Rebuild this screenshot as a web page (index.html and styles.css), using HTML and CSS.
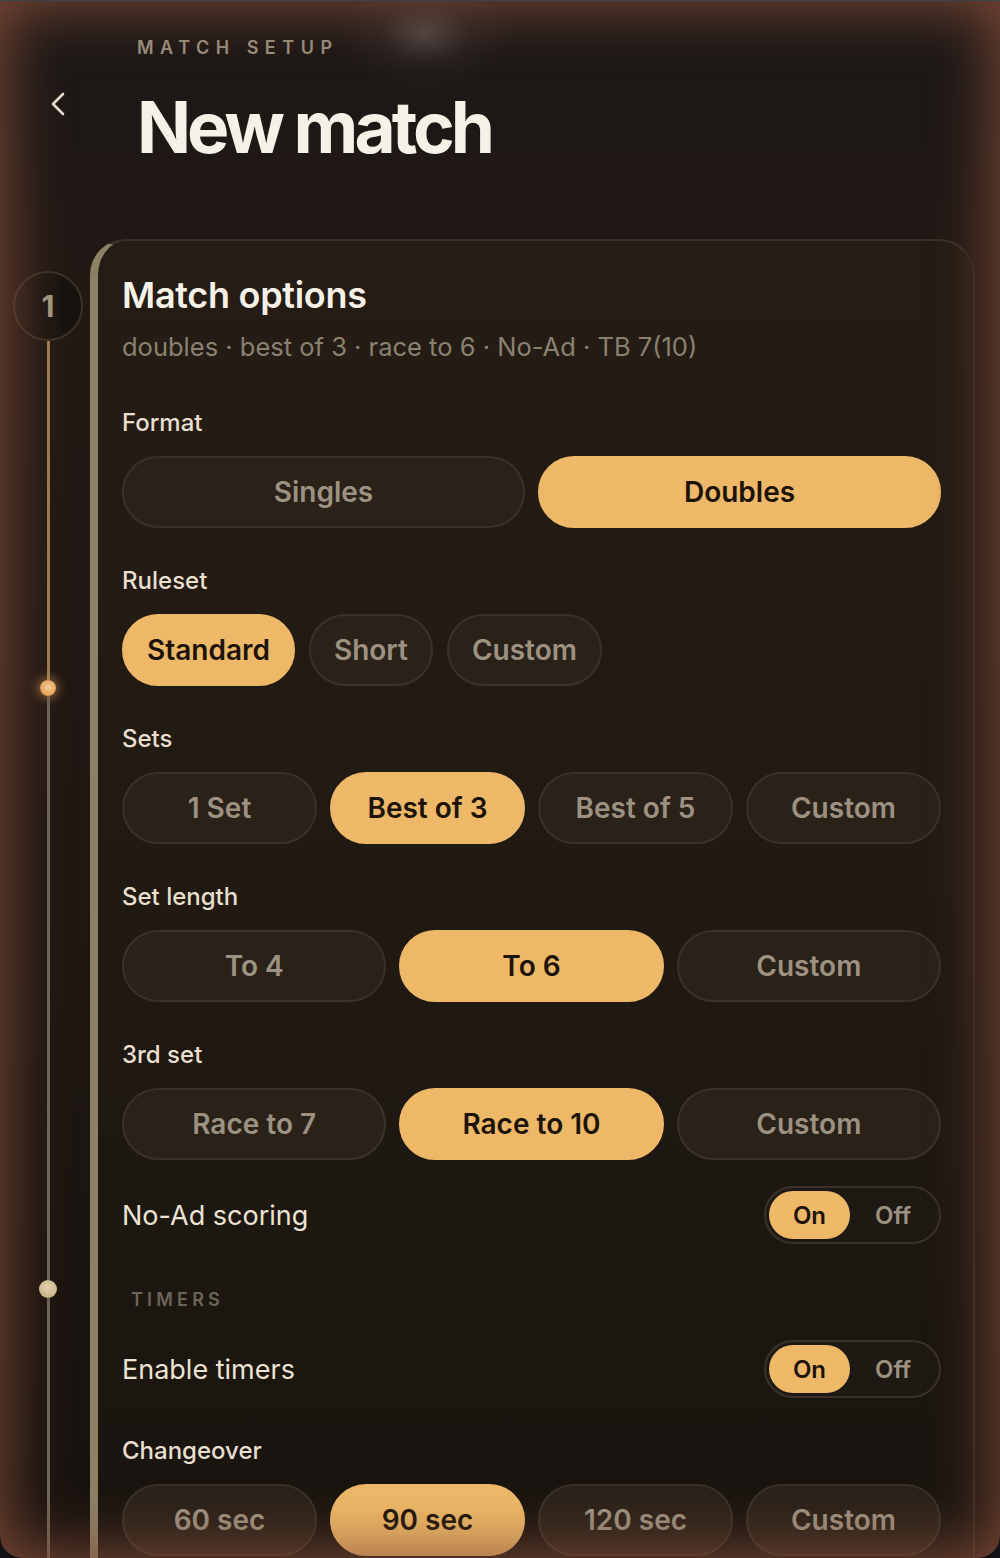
FILE: index.html
```html
<!DOCTYPE html>
<html lang="en">
<head>
  <meta charset="UTF-8" />
  <meta name="viewport" content="width=device-width, initial-scale=1.0"/>
  <title>New match</title>
  <link rel="stylesheet" href="styles.css">
</head>
<body>
  <div class="screen">
    <header class="top">
      <a class="back" href="#" aria-label="Back">
        <svg viewBox="0 0 24 24" width="24" height="26"><polyline points="16,3 6,13 16,23" fill="none" stroke="#e8dfcf" stroke-width="2.6" stroke-linecap="round" stroke-linejoin="round"/></svg>
      </a>
      <div class="titles">
        <p class="eyebrow">MATCH SETUP</p>
        <h1>New match</h1>
      </div>
    </header>

    <div class="steps">
      <div class="rail">
        <div class="step-num">1</div>
        <div class="seg seg-done"></div>
        <div class="dot dot-live"></div>
        <div class="seg seg-mid"></div>
        <div class="dot dot-pale"></div>
        <div class="seg seg-rest"></div>
      </div>

      <section class="card">
        <h2>Match options</h2>
        <p class="summary">doubles · best of 3 · race to 6 · No-Ad · TB 7(10)</p>

        <div class="field">
          <div class="field-label">Format</div>
          <div class="choices cols-2">
            <button class="chip">Singles</button>
            <button class="chip on">Doubles</button>
          </div>
        </div>

        <div class="field">
          <div class="field-label">Ruleset</div>
          <div class="choices inline">
            <button class="chip on">Standard</button>
            <button class="chip">Short</button>
            <button class="chip">Custom</button>
          </div>
        </div>

        <div class="field">
          <div class="field-label">Sets</div>
          <div class="choices cols-4">
            <button class="chip">1 Set</button>
            <button class="chip on">Best of 3</button>
            <button class="chip">Best of 5</button>
            <button class="chip">Custom</button>
          </div>
        </div>

        <div class="field">
          <div class="field-label">Set length</div>
          <div class="choices cols-3">
            <button class="chip">To 4</button>
            <button class="chip on">To 6</button>
            <button class="chip">Custom</button>
          </div>
        </div>

        <div class="field">
          <div class="field-label">3rd set</div>
          <div class="choices cols-3">
            <button class="chip">Race to 7</button>
            <button class="chip on">Race to 10</button>
            <button class="chip">Custom</button>
          </div>
        </div>

        <div class="switch-row first">
          <span class="switch-label">No-Ad scoring</span>
          <div class="switch">
            <button class="opt on">On</button>
            <button class="opt">Off</button>
          </div>
        </div>

        <div class="group-title">TIMERS</div>

        <div class="switch-row">
          <span class="switch-label">Enable timers</span>
          <div class="switch">
            <button class="opt on">On</button>
            <button class="opt">Off</button>
          </div>
        </div>

        <div class="field">
          <div class="field-label">Changeover</div>
          <div class="choices cols-4">
            <button class="chip">60 sec</button>
            <button class="chip on">90 sec</button>
            <button class="chip">120 sec</button>
            <button class="chip">Custom</button>
          </div>
        </div>
      </section>
    </div>
  </div>
</body>
</html>
```

FILE: styles.css
```css
body {
  margin: 0;
  background-color: #121316;
  font-family: Inter, "Noto Sans", sans-serif;
}
.screen {
  position: relative;
  height: 1557px;
  overflow: hidden;
  border-top: 1px solid #3a444d;
  border-radius: 0 0 22px 22px;
  background:
    radial-gradient(ellipse 90px 60px at 425px 32px, rgba(190, 180, 178, 0.28) 0, rgba(120, 105, 100, 0.1) 50%, rgba(0, 0, 0, 0) 100%),
    linear-gradient(180deg, #1b1716 0%, #221915 18%, #1e1712 60%, #18120e 100%);
}
/* warm glow running round the edges, on top of everything */
.screen::after {
  content: "";
  position: absolute;
  top: 0;
  left: 0;
  right: 0;
  bottom: 0;
  border-radius: 0 0 22px 22px;
  box-shadow: inset 0 0 60px 6px rgba(132, 78, 58, 0.9);
  pointer-events: none;
}

/* header */
.top {
  display: flex;
  padding-top: 35px;
}
.back {
  display: block;
  width: 90px;
  padding: 54px 0 0 47px;
}
.back svg {
  display: block;
}
.eyebrow {
  margin: 0;
  font-size: 18px;
  line-height: 24px;
  font-weight: 600;
  letter-spacing: 6.5px;
  color: #9b907f;
}
h1 {
  margin: 27px 0 0 0;
  font-size: 71px;
  line-height: 80px;
  font-weight: 700;
  letter-spacing: -4px;
  color: #f6f1e6;
}

/* steps: rail + card */
.steps {
  display: flex;
  margin-top: 72px;
  margin-right: 25px;
}
.rail {
  width: 84px;
  padding-left: 6px;
  padding-top: 32px;
  display: flex;
  flex-direction: column;
  align-items: center;
  flex-shrink: 0;
}
.step-num {
  width: 66px;
  height: 66px;
  border-radius: 50%;
  border: 2px solid #3b3128;
  background: linear-gradient(90deg, #221b16, #15110d);
  display: flex;
  align-items: center;
  justify-content: center;
  font-size: 30px;
  font-weight: 700;
  color: #a69a84;
  flex-shrink: 0;
}
.seg {
  width: 3px;
}
.seg-done {
  height: 339px;
  background-color: #a27d4d;
}
.seg-mid {
  height: 584px;
  background-color: #6f6655;
}
.seg-rest {
  height: 400px;
  background-color: #6f6655;
}
.dot {
  border-radius: 50%;
  flex-shrink: 0;
}
.dot-live {
  width: 16px;
  height: 16px;
  background: radial-gradient(circle at 50% 45%, #fbd9a2, #eaa75a 70%, #d98f45);
  box-shadow: 0 0 10px 3px rgba(238, 168, 90, 0.45);
}
.dot-pale {
  width: 18px;
  height: 18px;
  background: radial-gradient(circle at 45% 40%, #eadcb6, #cdbb8e 75%);
}

.card {
  flex: 1;
  min-height: 1400px;
  border-left: 8px solid #8d8165;
  border-top: 2px solid #3a3025;
  border-right: 2px solid #2f261e;
  border-radius: 36px 36px 0 0;
  background: linear-gradient(180deg, #241c15 0%, #211a13 45%, #18130f 100%);
  padding: 30px 32px 0 24px;
}
h2 {
  margin: 0;
  font-size: 36px;
  line-height: 48px;
  font-weight: 600;
  letter-spacing: -0.3px;
  color: #f6f1e6;
}
.summary {
  margin: 12px 0 0 0;
  font-size: 25.5px;
  line-height: 32px;
  color: #8b8171;
}

.field {
  margin-top: 38px;
}
.card .summary + .field {
  margin-top: 45px;
}
.field-label {
  font-size: 24px;
  line-height: 30px;
  font-weight: 500;
  color: #e8dfcf;
  margin-bottom: 18px;
}
.choices {
  display: grid;
  gap: 13px;
}
.cols-2 { grid-template-columns: 1fr 1fr; }
.cols-3 { grid-template-columns: 1fr 1fr 1fr; }
.cols-4 { grid-template-columns: 1fr 1fr 1fr 1fr; }
.choices.inline {
  display: flex;
  gap: 14px;
}
.chip {
  height: 72px;
  border-radius: 36px;
  border: 2px solid #3a3128;
  background-color: #2a2119;
  color: #9d9281;
  font-family: Inter, sans-serif;
  font-size: 28px;
  font-weight: 600;
  padding: 0 23px;
  cursor: pointer;
}
.chip.on {
  background-color: #edb868;
  border-color: #edb868;
  color: #1c140b;
}

/* on/off rows */
.switch-row {
  display: flex;
  align-items: center;
  justify-content: space-between;
  margin-top: 26px;
}
.switch-label {
  font-size: 27px;
  color: #ece3d3;
}
.switch {
  display: flex;
  border: 2px solid #3a3128;
  border-radius: 30px;
  padding: 3px;
  background-color: #1f1914;
}
.opt {
  height: 48px;
  border: none;
  border-radius: 24px;
  background: none;
  font-family: Inter, sans-serif;
  font-size: 24px;
  font-weight: 600;
  color: #9d9281;
  width: 86px;
  cursor: pointer;
}
.opt.on {
  width: 81px;
  background-color: #edb868;
  color: #1c140b;
}
.group-title {
  margin: 44px 0 0 9px;
  font-size: 18px;
  line-height: 24px;
  font-weight: 600;
  letter-spacing: 4.2px;
  color: #6d6457;
}
.group-title + .switch-row {
  margin-top: 28px;
}
```
